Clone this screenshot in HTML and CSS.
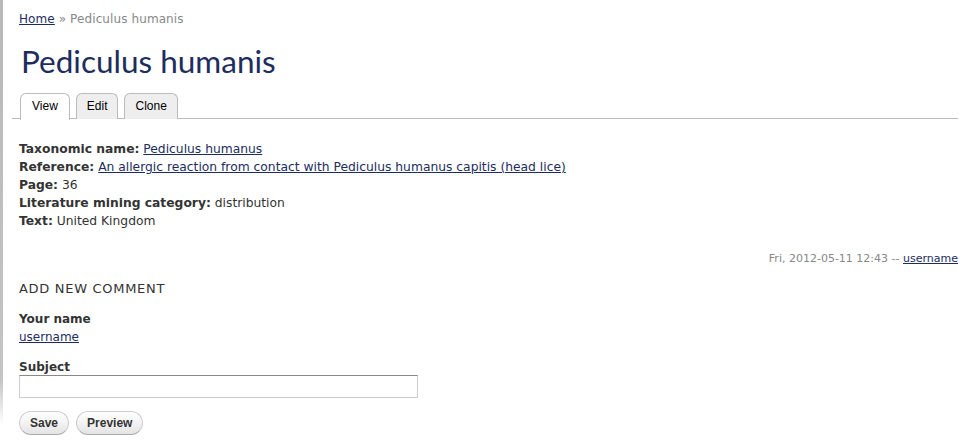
FILE: index.html
```html
<!DOCTYPE html>
<html>
<head>
<meta charset="utf-8">
<link rel="stylesheet" href="styles.css">
</head>
<body>
<div class="page">
  <div class="breadcrumb"><a href="#">Home</a> » Pediculus humanis</div>
  <h1 class="title">Pediculus humanis</h1>
  <ul class="tabs">
    <li class="tab active">View</li>
    <li class="tab">Edit</li>
    <li class="tab">Clone</li>
  </ul>
  <div class="fields">
    <div class="field"><span class="label">Taxonomic name:</span> <a href="#">Pediculus humanus</a></div>
    <div class="field"><span class="label">Reference:</span> <a href="#">An allergic reaction from contact with Pediculus humanus capitis (head lice)</a></div>
    <div class="field"><span class="label">Page:</span> 36</div>
    <div class="field"><span class="label">Literature mining category:</span> distribution</div>
    <div class="field"><span class="label">Text:</span> United Kingdom</div>
  </div>
  <div class="submitted">Fri, 2012-05-11 12:43 -- <a href="#">username</a></div>
  <h2 class="comment-title">ADD NEW COMMENT</h2>
  <div class="form-item">
    <div class="form-label">Your name</div>
    <a href="#">username</a>
  </div>
  <div class="form-item">
    <div class="form-label">Subject</div>
    <input class="text-input" type="text">
  </div>
  <div class="actions">
    <button class="btn">Save</button>
    <button class="btn">Preview</button>
  </div>
</div>
</body>
</html>
```
FILE: styles.css
```css
html, body { margin: 0; padding: 0; background: #fff; }
body {
  font-family: "DejaVu Sans", Verdana, sans-serif;
  font-size: 12px;
  color: #333;
}
.page {
  height: 446px;
  box-sizing: border-box;
  padding: 11px 17px 0 16px;
  border-left: 3px solid transparent;
  border-image: linear-gradient(to bottom, #b8b8b8 0%, #c4c4c4 85%, #fff 95%) 1;
}
a { color: #1c2d5e; text-decoration: underline; }
.breadcrumb { color: #888; font-size: 12px; line-height: 16px; letter-spacing: 0.1px; }
.title {
  font-family: "Lato", "Open Sans", sans-serif;
  font-weight: 400;
  font-size: 31.5px;
  color: #1c2d5e;
  margin: 14px 0 0 2px;
  line-height: 40px;
}
.tabs {
  list-style: none;
  margin: 12px 0 0 -7px;
  padding: 0 0 0 8px;
  display: flex;
  gap: 6px;
  border-bottom: 1px solid #bbb;
  height: 26px;
  box-sizing: border-box;
}
.tab {
  font-family: "Liberation Sans", Arial, sans-serif;
  font-size: 12px;
  background: #eee;
  border: 1px solid #bbb;
  border-bottom: none;
  border-radius: 6px 6px 0 0;
  padding: 0 10px;
  line-height: 24px;
  height: 25px;
  color: #000;
}
.tab.active { background: #fff; height: 26px; padding: 0 11px; }
.fields { margin-top: 21px; font-size: 12.3px; }
.field { line-height: 18px; }
.label { font-weight: bold; }
.submitted {
  text-align: right;
  color: #888;
  font-size: 11px;
  margin-top: 21px;
  line-height: 16px;
}
.comment-title {
  font-size: 13px;
  font-weight: normal;
  margin: 13px 0 0;
  line-height: 18px;
  color: #333;
  letter-spacing: 0.7px;
}
.form-item { margin-top: 12px; }
.form-label { font-weight: bold; line-height: 18px; }
.form-item a { line-height: 18px; display: block; }
.text-input {
  display: block;
  width: 399px;
  height: 23px;
  box-sizing: border-box;
  border: 1px solid #ccc;
  border-top-color: #888;
  margin: -1px 0 0;
  padding: 0 4px;
}
.actions { display: flex; gap: 7px; margin-top: 13px; }
.btn {
  font-family: "Liberation Sans", Arial, sans-serif;
  font-size: 12px;
  font-weight: bold;
  color: #333;
  height: 24px;
  padding: 0 10px;
  border: 1px solid #ccc;
  border-bottom-color: #aaa;
  border-radius: 12px;
  background: linear-gradient(to bottom, #fff 0%, #f3f3f3 50%, #e3e3e3 100%);
}
```
